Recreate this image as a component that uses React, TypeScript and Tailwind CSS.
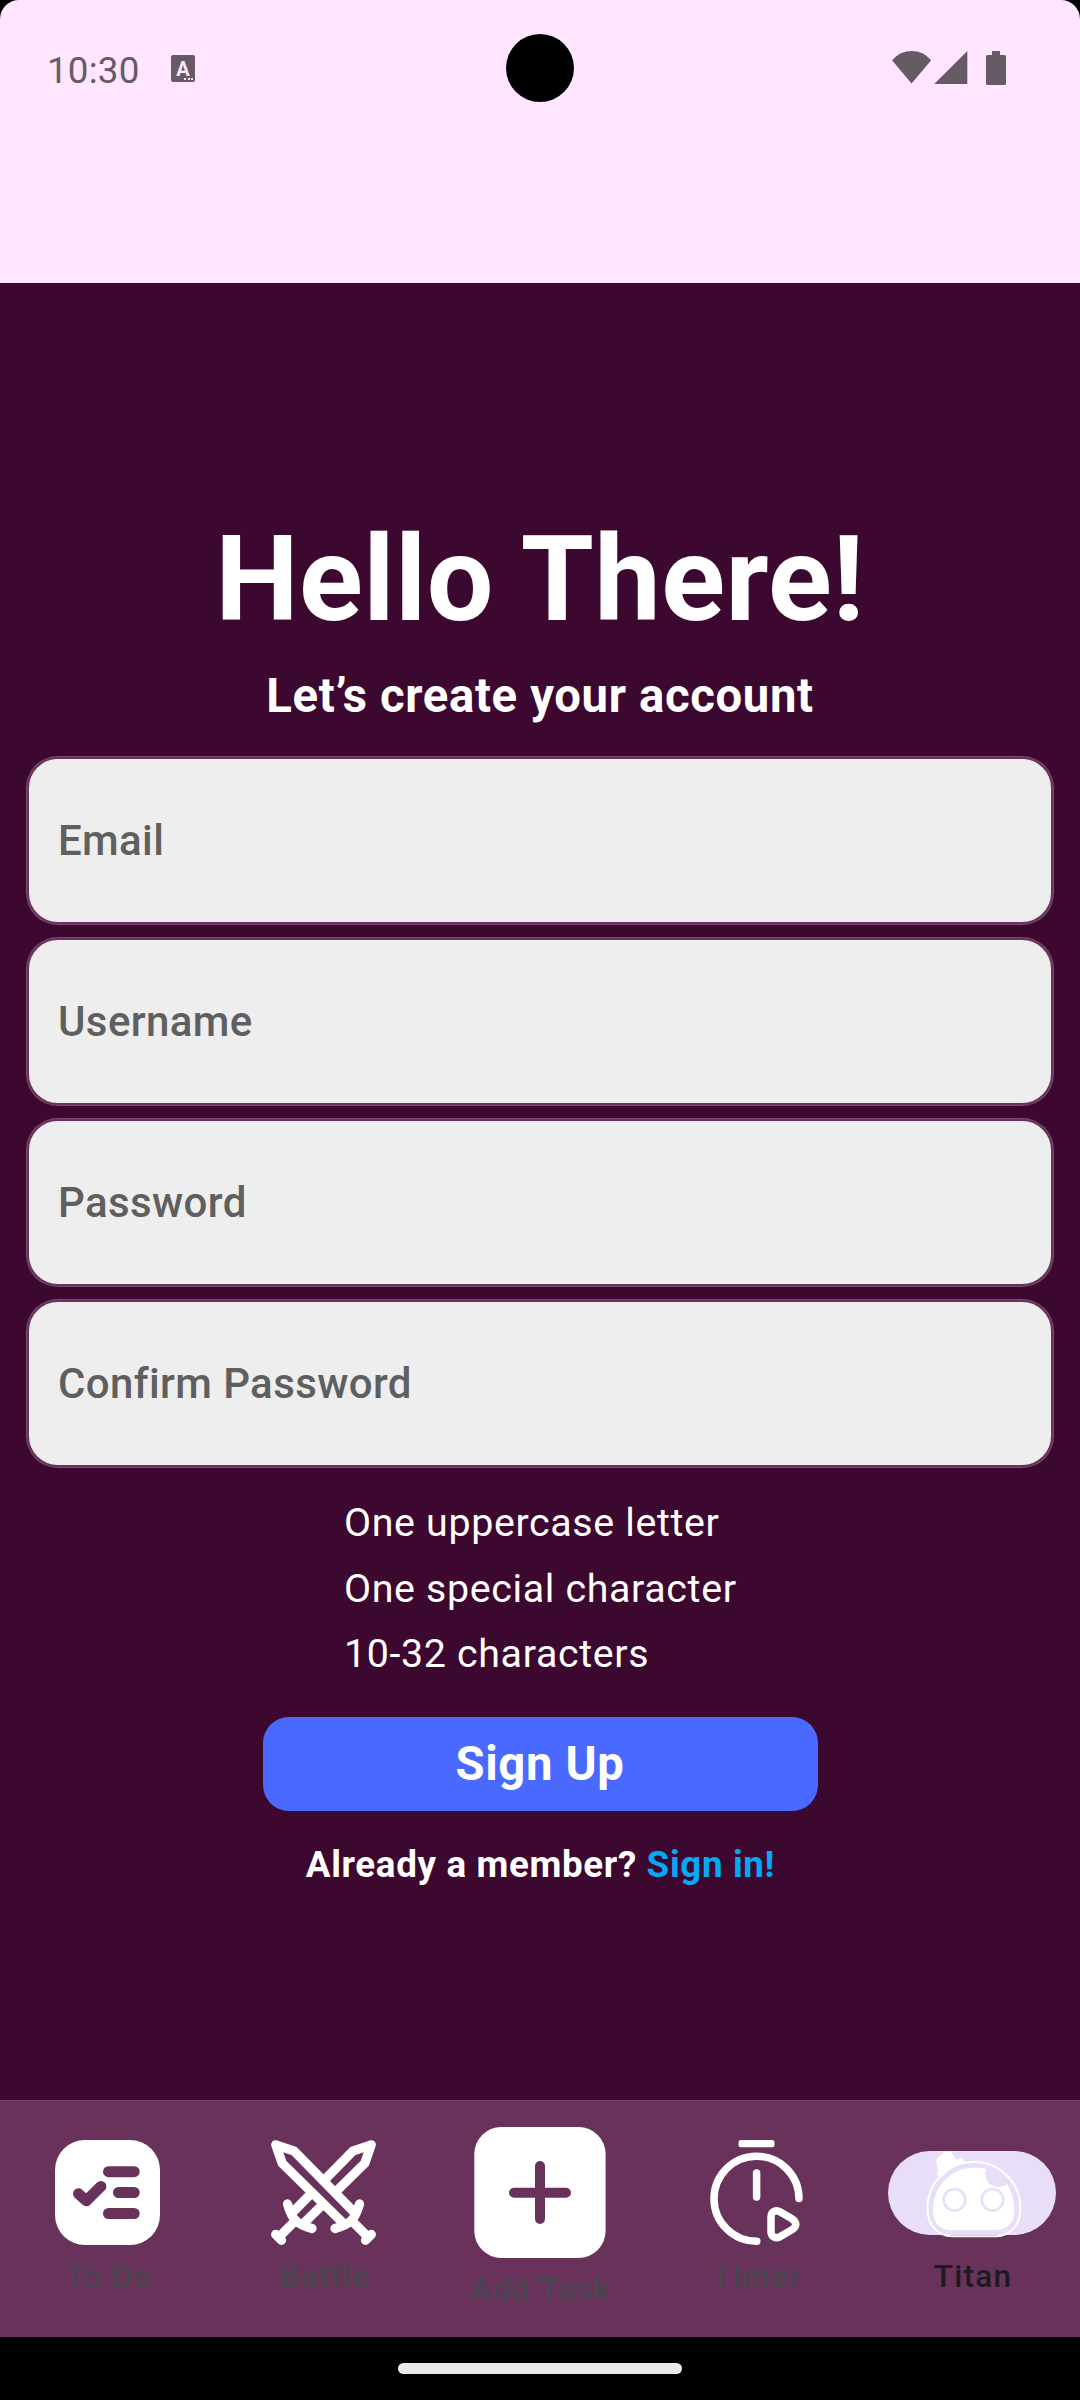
import type { ReactNode } from "react";

const fields = ["Email", "Username", "Password", "Confirm Password"];
const rules = ["One uppercase letter", "One special character", "10-32 characters"];

function StatusBar() {
  return (
    <div className="relative flex h-[136px] items-center justify-between pl-[47px] pr-[74px] text-[#665b65]">
      <div className="flex items-center">
        <span className="w-[124px] pt-[6px] text-[36.75px] leading-[40px] tracking-[0.2px]">10:30</span>
        <div className="relative mt-[1px] h-[27px] w-6 rounded-[2px] bg-[#665b65]">
          <span className="absolute left-0 top-[3px] w-6 text-center text-[20px] font-bold leading-[23px] text-[#ffe5ff]">A</span>
          <div className="absolute bottom-[2px] right-[2px] flex gap-[1.5px]">
            <i className="size-[2px] bg-[#ffe5ff]" />
            <i className="size-[2px] bg-[#ffe5ff]" />
            <i className="size-[2px] bg-[#ffe5ff]" />
          </div>
        </div>
      </div>
      <div className="absolute left-[506px] top-[34px] size-[68px] rounded-full bg-black" />
      <svg width="114" height="34" viewBox="892 51 114 34" fill="currentColor">
        <path d="M892 60.3Q900 51 911.6 51T931.2 60.3L911.6 83.6Z" />
        <path d="M967.3 51V84H934.2Z" />
        <path d="M992 51h8v4h4.5q1.5 0 1.5 1.500V83.500q0 1.500-1.500 1.500H987.500q-1.500 0-1.500-1.500V56.500q0-1.500 1.500-1.500H992Z" />
      </svg>
    </div>
  );
}

function TodoIcon() {
  return (
    <svg className="mr-px" width="105" height="105" viewBox="0 0 105 105" fill="none">
      <rect width="105" height="105" rx="30" fill="#fff" />
      <g stroke="#69325a" strokeWidth="11" strokeLinecap="round" strokeLinejoin="round">
        <path d="M53.500 31.700H79.200M63.500 52.500H79.200M53.500 73.500H79.200" />
        <path d="M23.500 53.700L31.300 60.800L45.900 46.400" />
      </g>
    </svg>
  );
}

function Sword() {
  return (
    <g>
      <path d="M4.800 4.800L23.800 10.800L92.500 79.500L79.500 92.500L10.800 23.800Z" fill="#69325a" stroke="none" />
      <path d="M82 71L23.300 11.200L4.800 4.800L11.200 23.300L71 82" />
      <path d="M88.500 64Q85 76 80.500 80.500T64 88.500" />
      <path d="M80.500 80.500L97 97M100.300 94.500L94.500 100.300" />
    </g>
  );
}

function BattleIcon() {
  return (
    <svg className="mr-px" width="105" height="105" viewBox="0 0 105 105" fill="none" stroke="#fff" strokeWidth="9.300" strokeLinecap="round" strokeLinejoin="round">
      <g transform="translate(105 0) scale(-1 1)">
        <Sword />
      </g>
      <Sword />
    </svg>
  );
}

function AddIcon() {
  return (
    <svg width="132" height="131" viewBox="0 0 132 131" fill="none">
      <rect x="0.300" width="131.300" height="131" rx="27" fill="#fff" />
      <path d="M66 39V92M40 65.700H92" stroke="#69325a" strokeWidth="10" strokeLinecap="round" />
    </svg>
  );
}

function TimerIcon() {
  return (
    <svg width="105" height="105" viewBox="0 0 105 105" fill="none" stroke="#fff" strokeWidth="7.500" strokeLinecap="round" strokeLinejoin="round">
      <rect x="34.500" y="0" width="36" height="7.200" rx="2.500" fill="#fff" stroke="none" />
      <path d="M95 58.500A42.500 42.500 0 1 0 52.800 101.200" />
      <path d="M52.600 33V57" />
      <path d="M67 77C67 72.500 70.500 69.300 75.500 71.600L87.500 78.500C93.200 82 93.200 86.600 87.500 90.100L75.500 97C70.500 99.300 67 96 67 91.600Z" />
    </svg>
  );
}

function TitanIcon() {
  return (
    <svg width="105" height="105" viewBox="0 0 105 105" fill="none">
      <path d="M7.500 67.700A46.400 45.700 0 0 1 100.300 67.700V69C100.300 85 90 96.300 76 96.300H32C18 96.300 7.500 85 7.500 69Z" stroke="#fff" strokeWidth="2" />
      <path d="M13.200 70C13.200 46 31 27.700 53.800 27.700C58 27.700 62 28 66.200 29A13.300 13.300 0 0 0 87.200 44C91.500 51 94.200 60 94.200 71V73C94.200 83 86 90 76 90H31C21 90 13.200 83 13.200 73Z" fill="#fff" />
      <circle cx="34.500" cy="59.700" r="10.800" stroke="#e8def8" strokeWidth="2.500" />
      <circle cx="72.500" cy="59.700" r="10.800" stroke="#e8def8" strokeWidth="2.500" />
      <path d="M18 18.500L25.500 12.200L30 12.600L36.200 21L41.500 18.800L43.600 21.500L33 26L20.500 36.200L17.500 34L19.500 31L17.300 23Z" fill="#fff" stroke="#fff" strokeWidth="2" strokeLinejoin="round" />
    </svg>
  );
}

function NavItem({ label, icon, active = false }: { label: string; icon: ReactNode; active?: boolean }) {
  return (
    <div className="flex flex-col items-center justify-center">
      <div className="relative flex items-center justify-center">
        {active && <div className="absolute h-[84px] w-[168px] rounded-full bg-[#e8def8]" />}
        <div className="relative">{icon}</div>
      </div>
      <span className={`mt-[11px] pl-[2px] text-[31.5px] font-medium leading-[42px] tracking-[1.25px] ${active ? "text-[#1d1b20]" : "text-[#49454f]"}`}>
        {label}
      </span>
    </div>
  );
}

export default function App() {
  return (
    <div className="h-[2400px] w-[1080px] overflow-hidden bg-black font-['Roboto',sans-serif]">
      <header className="h-[283px] rounded-t-[19px] bg-[#ffe5ff]">
        <StatusBar />
      </header>

      <main className="flex h-[1817px] flex-col items-center bg-[#3d082f] pt-[237px] text-white">
        <h1 className="text-[118.125px] font-bold leading-[120px] tracking-[0.5px]">Hello There!</h1>
        <h2 className="mt-[26px] text-[47.25px] font-bold leading-[60px] tracking-[0.65px]">Let’s create your account</h2>
        <div className="mt-[31px] flex w-full flex-col gap-[14.500px] px-[27px]">
          {fields.map((name) => (
            <label
              key={name}
              className="flex h-[166.600px] items-center rounded-[31px] border-2 border-[#69325a] bg-[#eee] pl-[29px] text-[42px] font-medium tracking-[0.39px] text-[#5f5f5f] shadow-[0_0_0_1px_#7a4c6e]"
            >
              {name}
            </label>
          ))}
        </div>
        <ul className="mt-[23.200px] w-[392px] whitespace-nowrap text-[39.375px] leading-[65.600px] tracking-[0.65px]">
          {rules.map((rule) => (
            <li key={rule}>{rule}</li>
          ))}
        </ul>
        <button className="mt-[30px] h-[94.500px] w-[555px] shrink-0 rounded-[26px] bg-[#4a69ff] text-[47.25px] font-bold tracking-[0.65px]">Sign Up</button>
        <p className="mt-[29px] pl-px text-[36.75px] font-bold leading-[50px] tracking-[0.65px]">
          Already a member? <a className="text-[#03a9f4]">Sign in!</a>
        </p>
      </main>

      <nav className="grid h-[237px] grid-cols-5 border-t border-[#774568] bg-[#69325a]">
        <NavItem label="To Do" icon={<TodoIcon />} />
        <NavItem label="Battle" icon={<BattleIcon />} />
        <NavItem label="Add Task" icon={<AddIcon />} />
        <NavItem label="Timer" icon={<TimerIcon />} />
        <NavItem label="Titan" icon={<TitanIcon />} active />
      </nav>

      <footer className="flex h-[63px] items-center justify-center">
        <div className="h-[11px] w-[284px] rounded-full bg-[#ebebeb]" />
      </footer>
    </div>
  );
}
